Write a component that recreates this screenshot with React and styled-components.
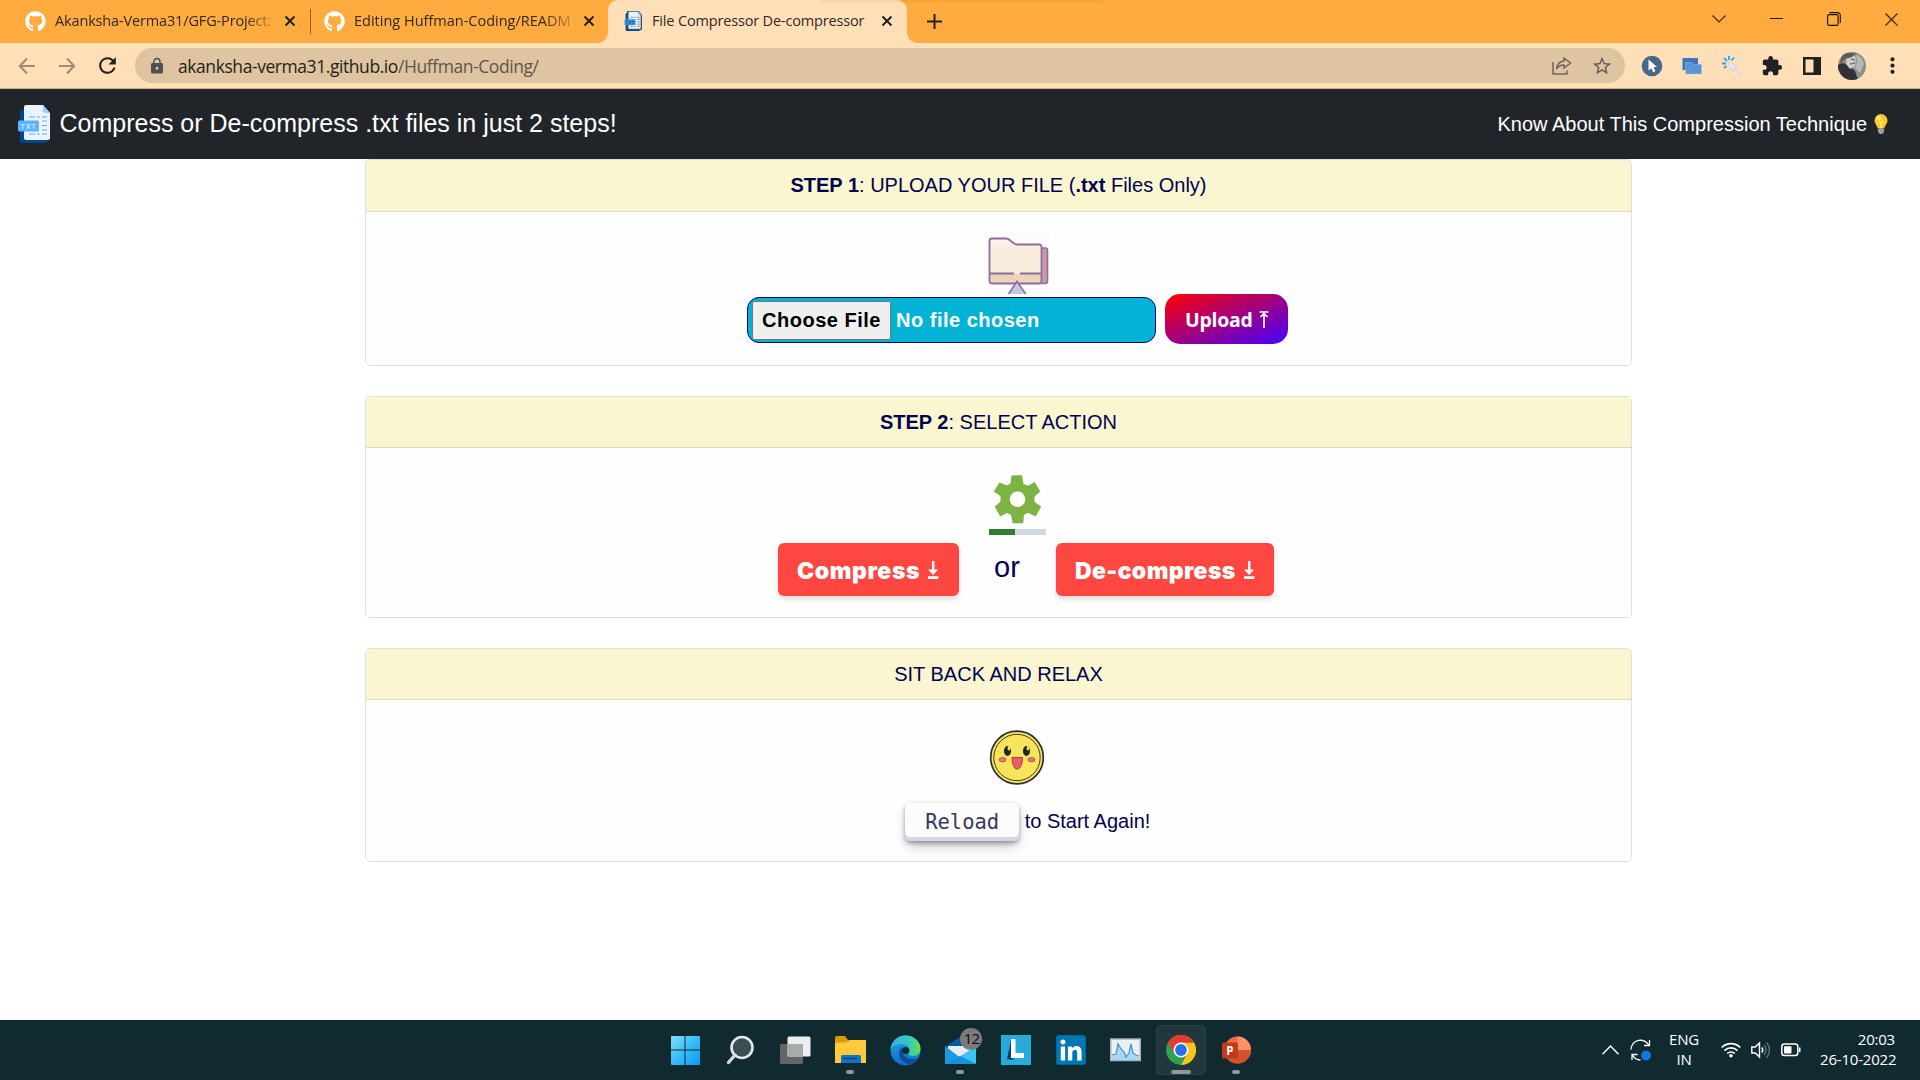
import React from "react";
import styled, { createGlobalStyle, css } from "styled-components";
import { FaGithub, FaLinkedin } from "react-icons/fa";
import { MdExtension, MdRefresh, MdLock, MdStarBorder, MdMoreVert } from "react-icons/md";

const GlobalStyle = createGlobalStyle`
  *, *::before, *::after { box-sizing: border-box; }
  body { margin: 0; background: #fff; font-family: "Liberation Sans", Arial, sans-serif; overflow: hidden; }
  svg { display: block; flex: none; }
`;

const ui = css`font-family: "Open Sans", "Noto Sans", sans-serif;`;

const Screen = styled.div`
  width: 1920px; height: 1080px; display: flex; flex-direction: column; overflow: hidden;
`;

/* ---------- browser tabs ---------- */
const TabStrip = styled.div`
  position: relative; flex: none; height: 43px; background: #ffab40;
  display: flex; ${ui}
`;
const StripShade = styled.div`
  position: absolute; top: 0; left: 820px; width: 282px; height: 4px;
  background: linear-gradient(rgba(150, 80, 0, 0.1), rgba(150, 80, 0, 0));
`;
const Tab = styled.div`
  position: relative; width: ${p => p.$w}px; height: 43px; display: flex; align-items: center;
  padding: 0 10px 1px ${p => p.$pl}px;
  ${p => p.$active && css`
    background: #ffdfb8; border-radius: 10px 10px 0 0;
    &::before, &::after {
      content: ""; position: absolute; bottom: 0; width: 10px; height: 10px;
    }
    &::before { left: -10px; background: radial-gradient(circle at 0 0, transparent 9.5px, #ffdfb8 10px); }
    &::after { right: -10px; background: radial-gradient(circle at 100% 0, transparent 9.5px, #ffdfb8 10px); }
  `}
`;
const TabTitle = styled.span`
  flex: none; width: ${p => p.$w}px; margin-left: ${p => p.$ml}px; padding-bottom: 1px; white-space: nowrap;
  font-size: 14.5px; line-height: 22px; color: #2f2a24; letter-spacing: ${p => p.$ls}px;
  ${p => p.$fade && css`mask-image: linear-gradient(90deg, #000 88%, rgba(0, 0, 0, 0.25) 100%);`}
`;
const TabClose = styled.span`margin-left: ${p => p.$ml}px;`;
const TabDivider = styled.div`width: 1px; height: 25px; margin-top: 9px; background: #8f6430;`;
const NewTab = styled.div`margin: 14px 0 0 20px;`;
const WindowControls = styled.div`
  margin-left: auto; display: flex; height: 38px;
`;
const Control = styled.div`
  width: 57.4px; display: flex; align-items: center; justify-content: center;
`;

/* ---------- browser toolbar ---------- */
const Toolbar = styled.div`
  flex: none; height: 46px; background: #ffdfb8; border-bottom: 1px solid #c9b192;
  display: flex; align-items: center; padding: 0 7px; ${ui}
`;
const Slot = styled.div`
  width: 40px; height: 40px; display: flex; align-items: center; justify-content: center;
`;
const AddressBar = styled.div`
  margin-left: 8px; width: 1490px; height: 35px; border-radius: 18px; background: #dec4a1;
  display: flex; align-items: center; padding: 0 3px 0 13px; margin-right: 7px; color: #4d5054;
`;
const Url = styled.span`
  margin-left: 12px; flex: 1; font-size: 17.5px; line-height: 26px; color: #5f5648; letter-spacing: -0.43px;
  b { font-weight: 400; color: #241f1a; }
`;
const Avatar = styled.div`width: 28px; height: 28px; border-radius: 50%; overflow: hidden;`;

/* ---------- page ---------- */
const NavBar = styled.header`
  flex: none; height: 70px; background: #212529; color: #fff; display: flex; align-items: center;
  padding: 0 32px 0 18px;
`;
const Brand = styled.h1`
  margin: 0 auto 0 9.5px; padding-bottom: 2px; font-size: 25px; font-weight: 400; line-height: 36px;
`;
const NavLink = styled.a`
  display: flex; align-items: center; gap: 7px; font-size: 20px; line-height: 30px;
`;
const Main = styled.main`
  flex: 1; display: flex; flex-direction: column; padding-left: 365px; color: #010153;
`;
const Card = styled.section`
  flex: none; width: 1267px; height: ${p => p.$h}px; margin-bottom: ${p => p.$mb}px;
  border: 1px solid #dfdfdf; border-radius: 5px; overflow: hidden; display: flex; flex-direction: column;
`;
const CardHeader = styled.div`
  flex: none; height: ${p => p.$h || 51}px; background: #faf6cf; border-bottom: 1px solid #dbd9b8; text-align: center;
  font-size: 20px; line-height: 50px;
`;
const CardBody = styled.div`
  flex: 1; background: #fefefe; display: flex; flex-direction: column; align-items: center;
  padding: ${p => p.$pt}px 0 0 ${p => p.$pl}px;
`;
const Row = styled.div`
  display: flex; align-items: center; margin-top: ${p => p.$mt || 0}px; margin-left: ${p => p.$ml || 0}px;
`;
const FileInput = styled.div`
  width: 409px; height: 46px; margin-top: 2px; border: 1px solid #000080; border-radius: 12px; background: #03b3d6;
  display: flex; align-items: center; padding: 0 4px; color: #fff; font-size: 20px; font-weight: 700;
  letter-spacing: 0.5px;
`;
const ChooseButton = styled.button`
  width: 139px; height: 39px; margin: 0 5px 0 0; padding: 0; border: 1px solid #767676; border-radius: 2px;
  background: #efefef; color: #000; font: 700 20px "Liberation Sans", Arial, sans-serif; letter-spacing: 0.5px;
`;
const UploadButton = styled.button`
  width: 123px; height: 50px; margin-left: 9px; border: 0; border-radius: 15px; padding: 0 0 0 20px;
  background: linear-gradient(to bottom right, #ff0000, #4400ff); color: #fff;
  display: flex; align-items: center; gap: 7px; font: 700 19.5px "Open Sans", "Noto Sans", sans-serif;
  letter-spacing: -0.3px;
`;
const ActionButton = styled.button`
  width: ${p => p.$w}px; height: 53px; border: 0; border-radius: 6px; background: #ff4742; color: #fff;
  box-shadow: rgba(0, 0, 0, 0.14) 0 3px 5px; padding: 2px 0 0 19px; display: flex; align-items: center; gap: 7px;
  font: 900 23px Inter, "Liberation Sans", sans-serif; letter-spacing: ${p => p.$ls}px;
`;
const Or = styled.span`
  width: 97px; padding: 0 1px 5px 0; text-align: center; font-size: 29px; line-height: 40px;
`;
const ReloadButton = styled.button`
  width: 114px; height: 38px; border: 0; border-radius: 5px; background: #fcfcfd; color: #36395a; padding: 0 0 1px 1px;
  box-shadow: rgba(45, 35, 66, 0.4) 0 2px 4px, rgba(45, 35, 66, 0.3) 0 7px 13px -3px, #d6d6e7 0 -4px 0 inset;
  font: 400 20.5px "DejaVu Sans Mono", monospace;
`;
const RestartText = styled.span`margin-left: 6px; font-size: 20px; line-height: 30px; padding-bottom: 3px;`;

/* ---------- taskbar ---------- */
const TaskBar = styled.footer`
  flex: none; height: 60px; background: #112a30; color: #fff; display: flex; padding: 5px 25px 0 660px; ${ui}
`;
const Apps = styled.div`display: flex; gap: 5.1px;`;
const TaskButton = styled.div`
  position: relative; width: 50px; height: 50px; border-radius: 5px; display: flex; align-items: center; justify-content: center;
  ${p => p.$open && css`background: #20373e; box-shadow: inset 0 0 0 1px #2a4147;`}
`;
const Indicator = styled.span`
  position: absolute; bottom: 1px; left: 50%; width: ${p => p.$w}px; height: 4px; margin-left: ${p => -p.$w / 2}px;
  border-radius: 2px; background: #8f999c;
`;
const Badge = styled.span`
  position: absolute; top: 3px; left: 25px; width: 22px; height: 22px; border-radius: 50%; background: #7b7b7b;
  color: #0b0b0b; font-size: 15px; line-height: 21px; text-align: center; letter-spacing: -0.8px;
`;
const Tray = styled.div`
  margin-left: auto; display: flex; align-items: center; height: 50px;
`;
const TrayText = styled.div`
  width: ${p => p.$w}px; margin-left: ${p => p.$ml || 0}px; text-align: ${p => p.$align}; font-size: 15px; line-height: 20px;
  padding-bottom: 2px; letter-spacing: -0.2px; white-space: nowrap;
`;
const TrayIcon = styled.span`margin-left: ${p => p.$ml || 0}px;`;

/* ---------- drawings ---------- */
const Cross = () => (
  <svg width="12" height="12" viewBox="0 0 12 12" stroke="#24211d" strokeWidth="2" fill="none"><path d="M1.5 1.5l9 9M10.5 1.5l-9 9" /></svg>
);
const TxtIcon = ({ w, h, line }) => (
  <svg width={w} height={h} viewBox="0 0 32 38">
    <rect x="2" y="4" width="27" height="34" rx="2.5" fill="#00468f" />
    <path d="M8 0h17l7 8v25a2 2 0 0 1-2 2H8a2 2 0 0 1-2-2V2a2 2 0 0 1 2-2z" fill="#e9f4ff" stroke={line || "none"} strokeWidth="3" />
    <path d="M25 0l7 8h-5a2 2 0 0 1-2-2z" fill="#9dccf7" />
    <path d="M11 12h6M19 12h3M24 12h5M24 16h5M24 20.500h5M24 25h5M11 29h6M19 29h3M24 29h5" stroke={line || "#6da7e2"} strokeWidth="1.2" />
    <rect x="0" y="15.500" width="21" height="11" rx="1.500" fill={line ? "#3c8fd6" : "#5cb3ff"} />
    <text x="10.500" y="23.800" fontSize="7.800" fill={line ? "#143a5e" : "#e9f4ff"} textAnchor="middle" fontFamily="Roboto" letterSpacing=".8">TXT</text>
  </svg>
);
const Bulb = () => (
  <svg width="14" height="20" viewBox="0 0 14 20">
    <path d="M7 0a6.500 6.500 0 0 0-6.500 6.500c0 3 2.500 4.500 3.200 8h6.600c.7-3.500 3.200-5 3.200-8A6.500 6.500 0 0 0 7 0z" fill="#fcc92b" />
    <path d="M5 7l2 2 2-2M7 9v5.500" stroke="#fff0a8" strokeWidth="1.200" fill="none" />
    <ellipse cx="5" cy="4" rx="2.400" ry="2" fill="#ffe680" />
    <path d="M4 15h6v2.500L8.500 20h-3L4 17.500z" fill="#9aa0a4" />
  </svg>
);
const FolderArt = () => (
  <svg width="63" height="62" viewBox="0 0 63 62">
    <rect width="63" height="62" fill="#fcfcfc" />
    <rect x="53" y="16" width="8.500" height="35.500" rx="2.500" fill="#c99ba2" stroke="#8e6ba0" strokeWidth="1.600" />
    <path d="M6 6.500h14c2 0 3 .8 4.500 2.200l2.500 2c1.300 1.300 2.300 1.800 4 1.800h22c1.500 0 2.500.8 2.500 2.500V49c0 1.500-1 2.500-2.500 2.500H6c-1.500 0-2.500-1-2.500-2.500V9c0-1.500 1-2.500 2.500-2.500z" fill="#f9ecdc" />
    <path d="M4 14V9l2-2h14l7 6z" fill="#fdf1ec" />
    <path d="M4 42h51v9H5z" fill="#ecd4b9" />
    <path d="M6 6.500h14c2 0 3 .8 4.500 2.200l2.500 2c1.300 1.300 2.300 1.800 4 1.800h22c1.500 0 2.500.8 2.500 2.500V49c0 1.500-1 2.500-2.500 2.500H6c-1.500 0-2.500-1-2.500-2.500V9c0-1.500 1-2.500 2.500-2.500zM4 41.500h24M34 41.500h21" fill="none" stroke="#8e6ba0" strokeWidth="1.800" />
    <path d="M22.500 62L31 49.500 39.800 62" fill="#bfcbe6" stroke="#8e6ba0" strokeWidth="1.600" />
  </svg>
);
const GearArt = () => (
  <svg width="75" height="76" viewBox="0 0 75 76">
    <path fillRule="evenodd" fill="#7cb342" d="M31.500 8.400L42 8.200 43.500 17 48 18.700 54.700 15 60.300 24.600 54.600 29.500V35l6.600 4.500L55.700 49.500 48 45.800 44 48 43.200 56.300H32.700L31 48 27 46 20.300 49.500 14.700 39.700 20.500 34.500V29L13.700 24.500 19.500 15.500 26.800 18.500 30.500 16.500zM37.500 24.500a7.800 7.800 0 1 0 .01 0z" />
    <rect x="9" y="62" width="26" height="6" fill="#2e7d32" />
    <rect x="35" y="62" width="31" height="6" fill="#cfd8dc" />
  </svg>
);
const SmileArt = () => (
  <svg width="56" height="56" viewBox="0 0 56 56">
    <circle cx="28" cy="28.500" r="26.300" fill="#f8e45a" stroke="#2d3036" strokeWidth="1.700" />
    <circle cx="28" cy="28.500" r="23.200" fill="none" stroke="#3c3c36" strokeWidth="1" />
    <ellipse cx="18.500" cy="22" rx="3.500" ry="5" fill="#22252b" /><ellipse cx="37.500" cy="22" rx="3.500" ry="5" fill="#22252b" />
    <ellipse cx="20" cy="19.300" rx="1.400" ry="2.200" fill="#f8e45a" /><ellipse cx="39" cy="19.300" rx="1.400" ry="2.200" fill="#f8e45a" />
    <ellipse cx="13.500" cy="30.700" rx="3.500" ry="2.200" fill="#f0707e" stroke="#8a4a40" strokeWidth=".7" />
    <ellipse cx="42.500" cy="30.700" rx="3.500" ry="2.200" fill="#f0707e" stroke="#8a4a40" strokeWidth=".7" />
    <path d="M23 28.500h10.500c0 6-1.800 11.500-5.250 11.500S23 34.500 23 28.500z" fill="#f4586c" stroke="#7a3a35" strokeWidth=".8" />
  </svg>
);
const ArrowUp = () => (
  <svg width="10" height="17" viewBox="0 0 10 17" stroke="#fff" fill="none" strokeWidth="1.700"><path d="M.5 1h9M5 2v15M1.500 6L5 2.500 8.500 6" /></svg>
);
const ArrowDown = () => (
  <svg width="12" height="19" viewBox="0 0 12 19" fill="#fff"><path d="M5 0h2.400v8.500H11L6.200 14 1 8.500h4zM1 15.300h10.400V18H1z" /></svg>
);

const Back = ({ flip }) => (
  <svg width="18" height="18" viewBox="0 0 18 18" stroke="#a08c73" strokeWidth="2" fill="none" transform={flip ? "scale(-1,1)" : undefined}><path d="M17 9H2M9 1.500L1.800 9 9 16.500" /></svg>
);

const taskIcons = {
  windows: (
    <svg width="30" height="30" viewBox="0 0 30 30">
      <defs><linearGradient id="win" x1="0" y1="0" x2="1" y2="1"><stop offset="0" stopColor="#83e0fb" /><stop offset=".5" stopColor="#35bdf9" /><stop offset="1" stopColor="#0e96f3" /></linearGradient></defs>
      <path fill="url(#win)" d="M2 1h12.500v13.500H1V2a1 1 0 0 1 1-1zM15.500 1H29a1 1 0 0 1 1 1v12.500H15.500zM1 15.500h13.500V30H2a1 1 0 0 1-1-1zM15.500 15.500H30V29a1 1 0 0 1-1 1H15.500z" />
    </svg>
  ),
  search: (
    <svg width="30" height="30" viewBox="0 0 30 30"><circle cx="17" cy="12.500" r="10.500" fill="#3a4f54" stroke="#e6e8e9" strokeWidth="2.600" /><path d="M10 20l-6.500 7.500" stroke="#d9dcdd" strokeWidth="3.400" strokeLinecap="round" /></svg>
  ),
  view: (
    <svg width="32" height="30" viewBox="0 0 32 30"><rect x="1" y="9" width="23" height="20" rx="1.500" fill="#646565" /><rect x="8.500" y="1.500" width="23" height="20" rx="1.500" fill="#eeeeee" /><path d="M8.500 9H24v12.500H10a1.500 1.500 0 0 1-1.500-1.500z" fill="#a9abab" /></svg>
  ),
  folder: (
    <svg width="31" height="30" viewBox="0 0 31 30"><path d="M0 3a2 2 0 0 1 2-2h8l3 4v5H0z" fill="#dc9a07" /><path d="M0 7.500h11l3-2.500h17v23H0z" fill="#ffcb3c" /><path d="M6 21.500a1.500 1.500 0 0 1 1.500-1.500h17a1.500 1.500 0 0 1 1.500 1.500V28H6z" fill="#0f74c9" /><path d="M8 23.500h14" stroke="#06437d" strokeWidth="1.400" /></svg>
  ),
  edge: (
    <svg width="31" height="31" viewBox="0 0 31 31">
      <defs>
        <linearGradient id="e1" x1="0" y1=".4" x2="1" y2=".4"><stop offset="0" stopColor="#2bb5e2" /><stop offset=".6" stopColor="#36c8c0" /><stop offset="1" stopColor="#66e04e" /></linearGradient>
        <linearGradient id="e2" x1="0" y1="0" x2="0" y2="1"><stop offset="0" stopColor="#2aa5e2" /><stop offset="1" stopColor="#0a6dcb" /></linearGradient>
      </defs>
      <circle cx="15.500" cy="15.500" r="15" fill="url(#e2)" />
      <path d="M.6 14C1.500 6 7.500.5 15.500.5c9 0 15 6.500 15 13 0 4.500-3 7.500-7 7.500-3.500 0-5-1.500-5-2.500s1-1.200 1-3.500c0-3-3-6-7.500-6C7 9 2.500 11 .6 14z" fill="url(#e1)" />
      <path d="M12 12.500c-2.500 2-3.500 5-2.500 8.500 1.200 4.500 5.500 8 11 8 3.500-1.200 6.500-3.500 8-6.500-6 3.500-14.500 1.500-15.500-4.500-.3-2 .2-4 1.500-5.500z" fill="#0d4c94" />
      <circle cx="15.800" cy="15.500" r="3.500" fill="#112a30" />
    </svg>
  ),
  mail: (
    <svg width="31" height="30" viewBox="0 0 31 30"><path d="M0 12L15 2l16 10v4H0z" fill="#0a58a8" /><path d="M3 11h26v7L15 24 3 17z" fill="#e9ecef" /><path d="M0 11l17 13-6 5H0z" fill="#1d9be2" /><path d="M31 11L14 22l17 7z" fill="#3cc3f5" /><path d="M0 29l15-8 16 8z" fill="#1890dc" /></svg>
  ),
  letter: (
    <svg width="30" height="30" viewBox="0 0 30 30"><rect width="30" height="30" fill="#27acd9" /><path d="M10 5L6 24l5 1 4-3z" fill="#123a78" /><path d="M10 4h4.500v14H23v5H10z" fill="#fff" /></svg>
  ),
  linkedin: (
    <svg width="30" height="30" viewBox="0 0 30 30"><rect x="2" y="2" width="26" height="26" fill="#fff" /><FaLinkedin x="-1.900" y="-1.900" width="33.800" height="33.800" size={33.8} color="#0077b5" /></svg>
  ),
  monitor: (
    <svg width="31" height="24" viewBox="0 0 31 24"><rect x=".75" y="1" width="29.500" height="21.500" fill="#edf0f3" stroke="#aab2b8" strokeWidth="1.500" /><path d="M2 17l4-1 2-10 3 5 3 3 2 5 3-4 2-9 2 9 3 2 3 1v4H2z" fill="#a8d8f5" /><path d="M2 17l4-1 2-10 3 5 3 3 2 5 3-4 2-9 2 9 3 2 3 1" fill="none" stroke="#3c93c9" strokeWidth="1.200" /></svg>
  ),
  chrome: (
    <svg width="30" height="30" viewBox="0 0 30 30">
      <circle cx="15" cy="15" r="15" fill="#2ea04f" />
      <path d="M2 7.500A15 15 0 0 1 28 7.500L15 8.500l-5.500 10z" fill="#e33b2e" />
      <path d="M28 7.500A15 15 0 0 1 15 30l6.500-11.500L21.500 10 15 7.500z" fill="#fcc419" />
      <path d="M2 7.500A15 15 0 0 1 28 7.500H15l-6 5-1 5z" fill="#e33b2e" />
      <circle cx="15" cy="15" r="7.500" fill="#fff" /><circle cx="15" cy="15" r="5.900" fill="#2a6fe6" />
    </svg>
  ),
  ppt: (
    <svg width="30" height="30" viewBox="0 0 30 30"><circle cx="16.500" cy="15" r="13.500" fill="#ed6c47" /><path d="M16.500 1.500A13.500 13.500 0 0 1 30 15H16.500z" fill="#ff8f6b" /><path d="M3 15h27a13.500 13.500 0 0 1-27 0z" fill="#d35230" /><rect x="1" y="7.500" width="16" height="16" rx="1.500" fill="#c13b1b" /><text x="8.800" y="19.700" fill="#fff" fontSize="11.500" fontWeight="700" textAnchor="middle" fontFamily="Open Sans">P</text></svg>
  ),
};

const apps = [
  { id: "windows" }, { id: "search" }, { id: "view" }, { id: "folder", bar: 8 }, { id: "edge" },
  { id: "mail", bar: 8, badge: "12" }, { id: "letter" }, { id: "linkedin" }, { id: "monitor" },
  { id: "chrome", bar: 20, open: true }, { id: "ppt", bar: 8 },
];

export default function App() {
  return (
    <Screen>
      <GlobalStyle />
      <TabStrip>
        <Tab $w={310} $pl={25}>
          <FaGithub size={21} color="#fff" />
          <TabTitle $w={216} $ml={9} $ls={-0.15} $fade>Akanksha-Verma31/GFG-Project:</TabTitle>
          <TabClose $ml={13}><Cross /></TabClose>
        </Tab>
        <TabDivider />
        <Tab $w={297} $pl={13}>
          <FaGithub size={21} color="#fff" />
          <TabTitle $w={216} $ml={9} $ls={0} $fade>Editing Huffman-Coding/READM</TabTitle>
          <TabClose $ml={13}><Cross /></TabClose>
        </Tab>
        <Tab $w={299} $pl={16} $active>
          <TxtIcon w={18} h={20} line="#35536e" />
          <TabTitle $w={216} $ml={10} $ls={-0.16}>File Compressor De-compressor</TabTitle>
          <TabClose $ml={13}><Cross /></TabClose>
        </Tab>
        <NewTab>
          <svg width="15" height="15" viewBox="0 0 15 15" stroke="#24211d" strokeWidth="2"><path d="M7.500 0v15M0 7.500h15" /></svg>
        </NewTab>
        <StripShade />
        <WindowControls>
          <Control><svg width="14" height="8" viewBox="0 0 14 8" fill="none" stroke="#3b2a14" strokeWidth="1.200"><path d="M.5 .5L7 7 13.500 .5" /></svg></Control>
          <Control><svg width="13" height="2" viewBox="0 0 13 2"><rect width="13" height="1" fill="#1a1208" /></svg></Control>
          <Control><svg width="14" height="14" viewBox="0 0 14 14" fill="none" stroke="#1a1208" strokeWidth="1.100"><rect x=".6" y="2.600" width="10.500" height="10.800" rx="1.500" /><path d="M2.500 .6H10.500a2.700 2.700 0 0 1 2.800 2.800V11" /></svg></Control>
          <Control><svg width="13" height="13" viewBox="0 0 13 13" stroke="#3b2a14" strokeWidth="1.200"><path d="M.5 .5l12 12M12.500 .5l-12 12" /></svg></Control>
        </WindowControls>
      </TabStrip>

      <Toolbar>
        <Slot><Back /></Slot>
        <Slot><Back flip /></Slot>
        <Slot><MdRefresh size={25} color="#24211d" /></Slot>
        <AddressBar>
          <MdLock size={18} />
          <Url><b>akanksha-verma31.github.io</b>/Huffman-Coding/</Url>
          <Slot>
            <svg width="20" height="18" viewBox="0 0 20 18" fill="none" stroke="#6c665d" strokeWidth="1.500"><path d="M1 5v12h14v-3.500" /><path d="M12 1l6.500 5L12 11V8C8.500 8 6.500 9 4.500 12 5 7.500 7.500 4.500 12 4z" /></svg>
          </Slot>
          <Slot><MdStarBorder size={22} color="#5f5d5a" /></Slot>
        </AddressBar>
        <Slot><svg width="22" height="22" viewBox="0 0 22 22"><circle cx="11" cy="11" r="10.300" fill="#49678b" /><path d="M7.500 4.500v11l2.800-2.300 1.900 4 2.200-1-1.900-3.900 3.300-.5z" fill="#fff" /></svg></Slot>
        <Slot><svg width="20" height="18" viewBox="0 0 20 18"><rect x=".5" y="1" width="15.500" height="12" fill="#3f74bb" /><path d="M3.500 5.500h6l2 1.800h8V17h-16z" fill="#5b92d8" stroke="#a9c5e8" strokeWidth=".5" /></svg></Slot>
        <Slot><svg width="20" height="20" viewBox="0 0 20 20"><path d="M7 0v4M2 2l3 3.200M12 1.500L9.500 4.500M0 7.500h4M2 12l2.500-2" stroke="#26a0f0" strokeWidth="1.800" /><path d="M6 6l9 4-2.500 2 6.500 6.500-1 1L11.500 13 10 16z" fill="#e3eaf5" stroke="#b9c4d6" strokeWidth=".6" /></svg></Slot>
        <Slot><MdExtension size={22} color="#1f2022" /></Slot>
        <Slot><svg width="18" height="18" viewBox="0 0 18 18"><path fillRule="evenodd" fill="#1f2022" d="M0 0h18v18H0zM2.500 2.500v13h8v-13z" /></svg></Slot>
        <Slot>
          <Avatar>
            <svg width="28" height="28" viewBox="0 0 28 28"><rect width="28" height="28" fill="#8d8d8a" /><path d="M0 13C4 10 8 11 11 14l6 5 3 9H0z" fill="#303236" /><path d="M9 4c3-2 8-2 9 3l-1 7-5 3-4-5z" fill="#cfcecb" /><path d="M18 3c4 0 7 5 8 9l-4 9-5-5 2-6z" fill="#b9b8b4" /><path d="M4 1h14l-4 4-7 2-5 5z" fill="#5a5b5a" /><path d="M13 7l4 1M12 12l5-1" stroke="#77766f" strokeWidth="1.500" /></svg>
          </Avatar>
        </Slot>
        <Slot><MdMoreVert size={25} color="#24211d" /></Slot>
      </Toolbar>

      <NavBar>
        <TxtIcon w={32} h={38} />
        <Brand>Compress or De-compress .txt files in just 2 steps!</Brand>
        <NavLink>Know About This Compression Technique <Bulb /></NavLink>
      </NavBar>

      <Main>
        <Card $h={207} $mb={30}>
          <CardHeader $h={52}><b>STEP 1</b>: UPLOAD YOUR FILE (<b>.txt</b> Files Only)</CardHeader>
          <CardBody $pt={20} $pl={38}>
            <FolderArt />
            <Row>
              <FileInput><ChooseButton>Choose File</ChooseButton>No file chosen</FileInput>
              <UploadButton>Upload <ArrowUp /></UploadButton>
            </Row>
          </CardBody>
        </Card>

        <Card $h={222} $mb={30}>
          <CardHeader><b>STEP 2</b>: SELECT ACTION</CardHeader>
          <CardBody $pt={19} $pl={38}>
            <GearArt />
            <Row $ml={17}>
              <ActionButton $w={181} $ls={0.6}>Compress <ArrowDown /></ActionButton>
              <Or>or</Or>
              <ActionButton $w={218} $ls={0.38}>De-compress <ArrowDown /></ActionButton>
            </Row>
          </CardBody>
        </Card>

        <Card $h={214} $mb={0}>
          <CardHeader>SIT BACK AND RELAX</CardHeader>
          <CardBody $pt={29} $pl={37}>
            <SmileArt />
            <Row $mt={18} $ml={21}>
              <ReloadButton>Reload</ReloadButton>
              <RestartText>to Start Again!</RestartText>
            </Row>
          </CardBody>
        </Card>
      </Main>

      <TaskBar>
        <Apps>
          {apps.map(a => (
            <TaskButton key={a.id} $open={a.open}>
              {taskIcons[a.id]}
              {a.badge && <Badge>{a.badge}</Badge>}
              {a.bar && <Indicator $w={a.bar} />}
            </TaskButton>
          ))}
        </Apps>
        <Tray>
          <TrayIcon><svg width="17" height="10" viewBox="0 0 17 10" fill="none" stroke="#fff" strokeWidth="1.400"><path d="M.5 9.300L8.500 1l8 8.300" /></svg></TrayIcon>
          <TrayIcon $ml={11}>
            <svg width="22" height="22" viewBox="0 0 22 22" fill="none" stroke="#fff" strokeWidth="1.300"><path d="M1 10.500a9.500 9.500 0 0 1 18-4M19.500 1v5.500h-5.500M2 21v-5.500h5.500M2.500 16a9.500 9.500 0 0 0 8 5" /><circle cx="16" cy="16.500" r="5" fill="#0a7ae0" stroke="none" /></svg>
          </TrayIcon>
          <TrayText $w={30} $ml={17} $align="center">ENG<br />IN</TrayText>
          <TrayIcon $ml={22}>
            <svg width="20" height="16" viewBox="0 0 20 16" fill="none" stroke="#fff" strokeWidth="1.600"><path d="M.7 5.500a13 13 0 0 1 18.600 0M3.500 8.600a9.200 9.200 0 0 1 13 0M6.200 11.500a5.400 5.400 0 0 1 7.600 0" /><circle cx="10" cy="13.800" r="1.800" fill="#fff" stroke="none" /></svg>
          </TrayIcon>
          <TrayIcon $ml={10}>
            <svg width="20" height="18" viewBox="0 0 20 18" fill="none" stroke="#fff" strokeWidth="1.400"><path d="M.8 6h3.500L8.500 2v14l-4.200-4H.8zM10.800 6.500a4 4 0 0 1 0 5" /><path d="M13 4a7.500 7.500 0 0 1 0 10M15.500 1.500a11 11 0 0 1 0 15" stroke="#5e7074" /></svg>
          </TrayIcon>
          <TrayIcon $ml={10}>
            <svg width="20" height="14" viewBox="0 0 20 14"><rect x=".8" y="1" width="16" height="11.500" rx="2.500" fill="none" stroke="#fff" strokeWidth="1.500" /><rect x="3" y="3.200" width="7.500" height="7.200" rx=".8" fill="#fff" /><path d="M18 4.500h1.500v4.500H18z" fill="#fff" /></svg>
          </TrayIcon>
          <TrayText $w={75} $ml={19} $align="right">20:03<br />26-10-2022</TrayText>
        </Tray>
      </TaskBar>
    </Screen>
  );
}
